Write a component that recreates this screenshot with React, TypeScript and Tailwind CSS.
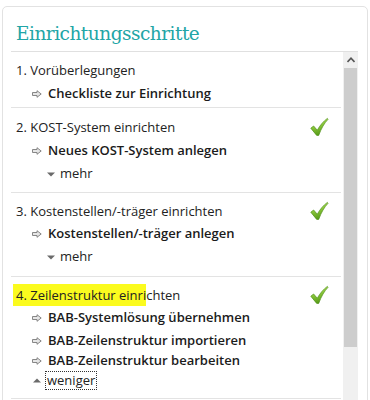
import React from "react";

const Arrow = () => (
  <svg width="10" height="8" viewBox="0 0 10 8" className="shrink-0">
    <polygon points="0.5,2.5 5,2.5 5,0.7 9.2,4 5,7.3 5,5.5 0.5,5.5" fill="#e6e6e6" stroke="#7a7a7a" strokeWidth="0.9" strokeLinejoin="round" />
  </svg>
);

const Down = () => (
  <svg width="8" height="5" viewBox="0 0 8 5" className="shrink-0">
    <polygon points="0,0.5 8,0.5 4,4.5" fill="#6a6a6a" />
  </svg>
);

const Up = () => (
  <svg width="8" height="5" viewBox="0 0 8 5" className="shrink-0">
    <polygon points="0,4.5 8,4.5 4,0.5" fill="#6a6a6a" />
  </svg>
);

const Check = ({ id }: { id: string }) => (
  <svg width="20" height="20" viewBox="0 0 20 20" className="shrink-0 -mt-[3px] mr-[14px]">
    <defs>
      <linearGradient id={id} x1="0" y1="0" x2="0.3" y2="1">
        <stop offset="0" stopColor="#c3ea6a" />
        <stop offset="0.5" stopColor="#8cc83a" />
        <stop offset="1" stopColor="#5a9d1a" />
      </linearGradient>
    </defs>
    <path
      d="M1.8 11.2 L4.6 9 L8.3 13.2 C10.8 8.6 14.3 4.3 18.4 1.4 L19 2.3 C15.5 6 12.3 11.2 9.7 18.4 L7.7 18.4 Z"
      fill={`url(#${id})`}
      stroke="#4e8f17"
      strokeWidth="0.7"
      strokeLinejoin="round"
    />
  </svg>
);

const LinkRow = ({ text, cls }: { text: string; cls: string }) => (
  <div className={`flex items-center h-[20px] pl-[21px] gap-[6px] font-semibold text-[#1b1b1b] ${cls}`}>
    <Arrow />
    <span>{text}</span>
  </div>
);

const Sep = () => <div className="h-[1px] bg-[#e3e3e3] mr-[2px]" />;

export default function App() {
  return (
    <div
      className="w-[370px] h-[400px] overflow-hidden bg-white pt-[6px] pl-[2px]"
      style={{ fontFamily: '"Open Sans", "Noto Sans", sans-serif' }}
    >
      <div className="w-[366px] h-[430px] border border-[#e2e2e2] rounded-[5px] pl-[8px] pr-[9px] bg-white">
        <div className="h-[45px] pt-[15px] pl-[5px] border-b border-[#e0e0e0]">
          <div
            className="text-[18.5px] leading-[24px] tracking-[-0.5px] text-[#22a5a6]"
            style={{ fontFamily: '"DejaVu Serif", serif' }}
          >
            Einrichtungsschritte
          </div>
        </div>
        <div className="flex">
          <div className="w-[332px] text-[13px] text-[#222]">
            {/* Section 1 */}
            <div className="pt-[9px] pb-[3px]">
              <div className="h-[20px] flex items-center pl-[5px]">1. Vorüberlegungen</div>
              <LinkRow text="Checkliste zur Einrichtung" cls="mt-[3px]" />
            </div>
            <Sep />
            {/* Section 2 */}
            <div className="pt-[10px] pb-[8px]">
              <div className="h-[20px] flex items-center justify-between pl-[5px]">
                <span>2. KOST-System einrichten</span>
                <Check id="g1" />
              </div>
              <LinkRow text="Neues KOST-System anlegen" cls="mt-[3px]" />
              <div className="mt-[3px] h-[20px] flex items-center pl-[36px] gap-[5px]">
                <Down />
                <span>mehr</span>
              </div>
            </div>
            <Sep />
            {/* Section 3 */}
            <div className="pt-[9px] pb-[9px]">
              <div className="h-[20px] flex items-center justify-between pl-[5px]">
                <span>3. Kostenstellen/-träger einrichten</span>
                <Check id="g2" />
              </div>
              <LinkRow text="Kostenstellen/-träger anlegen" cls="mt-[2px]" />
              <div className="mt-[3px] h-[20px] flex items-center pl-[36px] gap-[5px]">
                <Down />
                <span>mehr</span>
              </div>
            </div>
            <Sep />
            {/* Section 4 */}
            <div className="pt-[9px] pb-[8px]">
              <div className="h-[20px] flex items-center justify-between pl-[2px]">
                <span>
                  <span className="bg-[#fbfb1e] pl-[3px] py-[2px]">4. Zeilenstruktur einri</span>chten
                </span>
                <Check id="g3" />
              </div>
              <LinkRow text="BAB-Systemlösung übernehmen" cls="mt-[2px]" />
              <LinkRow text="BAB-Zeilenstruktur importieren" cls="mt-[3px]" />
              <LinkRow text="BAB-Zeilenstruktur bearbeiten" cls="h-[19px]" />
              <div className="h-[19px] flex items-center pl-[22px] gap-[4px]">
                <Up />
                <span className="border border-dotted border-[#333] leading-[17px] px-[1px]">weniger</span>
              </div>
            </div>
            <Sep />
          </div>
          <div className="w-[15px] flex flex-col bg-[#f0f0f0] h-[360px]">
            <div className="h-[16px] flex items-center justify-center">
              <svg width="8" height="6" viewBox="0 0 8 6">
                <path d="M0.5 5 L4 1.2 L7.5 5" fill="none" stroke="#555" strokeWidth="1.6" />
              </svg>
            </div>
            <div className="h-[279px] mx-[1px] bg-[#cdcdcd]" />
          </div>
        </div>
      </div>
    </div>
  );
}
